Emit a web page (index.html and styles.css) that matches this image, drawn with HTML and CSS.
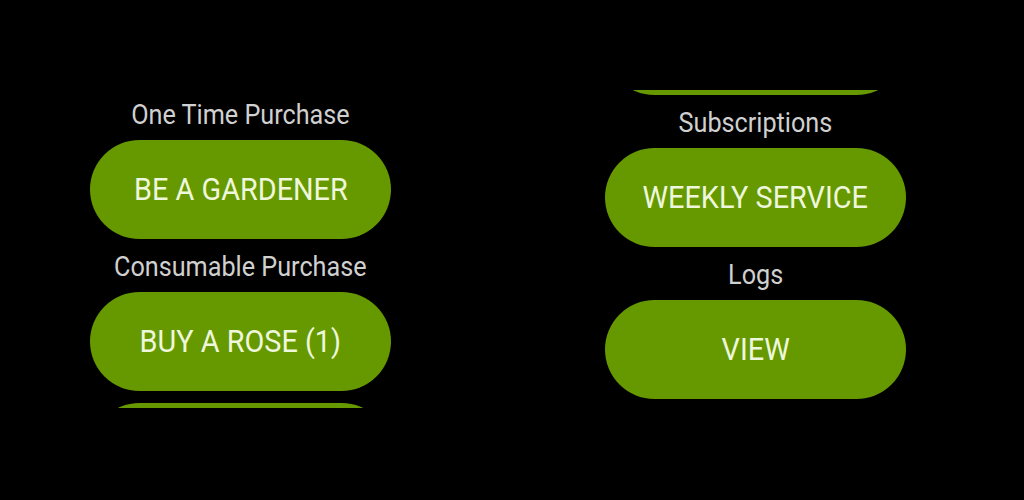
FILE: index.html
```html
<!DOCTYPE html>
<html lang="en">
<head>
<meta charset="utf-8">
<title>Garden Store</title>
<link rel="stylesheet" href="styles.css">
</head>
<body>
  <main class="screens">
    <section class="screen">
      <div class="list list-top">
        <p class="label"><span class="narrow">One Time Purchase</span></p>
        <button class="pill"><span class="narrow">BE A GARDENER</span></button>
        <p class="label"><span class="narrow">Consumable Purchase</span></p>
        <button class="pill"><span class="narrow">BUY A ROSE (1)</span></button>
        <div class="spacer"></div>
        <button class="pill" aria-hidden="true"></button>
      </div>
    </section>
    <section class="screen">
      <div class="list list-end">
        <button class="pill" aria-hidden="true"></button>
        <p class="label"><span class="narrow">Subscriptions</span></p>
        <button class="pill"><span class="narrow">WEEKLY SERVICE</span></button>
        <p class="label"><span class="narrow">Logs</span></p>
        <button class="pill"><span class="narrow">VIEW</span></button>
      </div>
    </section>
  </main>
</body>
</html>
```
FILE: styles.css
```css
html, body {
  margin: 0;
  padding: 0;
  background: #000;
}

body {
  width: 1024px;
  height: 500px;
  overflow: hidden;
  font-family: Roboto, "Liberation Sans", sans-serif;
}

.screens {
  display: flex;
  gap: 214px;
  padding: 90px 0 0 90px;
}

.screen {
  width: 301px;
  height: 318px;
  overflow: hidden;
}

.list {
  display: flex;
  flex-direction: column;
  align-items: stretch;
}

/* scroll positions of the two lists */
.list-top { margin-top: -3px; }
.list-end { margin-top: -94px; }

/* condensed look for the watch typeface */
.narrow {
  display: inline-block;
  white-space: nowrap;
  transform: scaleX(0.9);
}

.label {
  margin: 0;
  height: 53px;
  line-height: 56px;
  text-align: center;
  color: #d0d0d0;
  font-size: 28px;
}

.spacer {
  height: 12px;
}

.pill {
  height: 99px;
  border: none;
  border-radius: 50px;
  background: #669900;
  color: #eef7dc;
  font-family: Roboto, "Liberation Sans", sans-serif;
  font-size: 31px;
  padding: 0;
}

.pill .narrow {
  transform: scaleX(0.93);
}
```
